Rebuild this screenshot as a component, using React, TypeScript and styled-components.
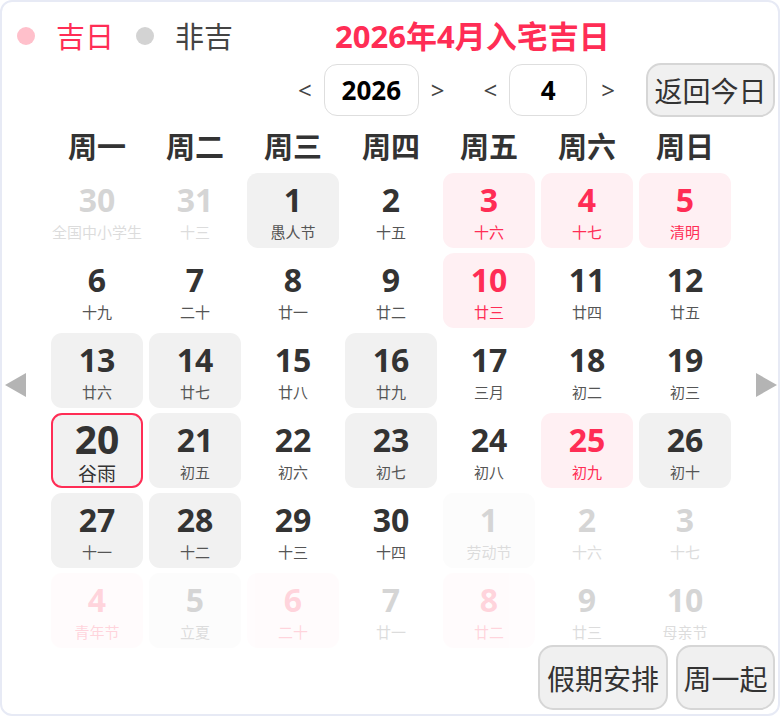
import React from "react";
import styled, { createGlobalStyle } from "styled-components";

const Global = createGlobalStyle`
  html, body { margin: 0; padding: 0; background: #fff; }
  body { font-family: "Noto Sans", "Noto Sans CJK SC", sans-serif; }
  * { box-sizing: border-box; }
`;

const RED = "#ff2d55";

const Card = styled.div`
  position: relative;
  width: 780px;
  height: 716px;
  border: 2px solid #e7eaf5;
  border-radius: 12px;
  background: #fff;
  display: flex;
  flex-direction: column;
  overflow: hidden;
`;

const TopRow = styled.div`
  display: flex;
  align-items: center;
  height: 66px;
  padding: 2px 0 0 15px;
`;

const Dot = styled.span<{ $c: string }>`
  width: 18px;
  height: 18px;
  border-radius: 50%;
  background: ${(p) => p.$c};
  margin-right: 21px;
`;

const Legend = styled.span<{ $c: string }>`
  font-size: 29px;
  color: ${(p) => p.$c};
  margin-right: 22px;
  line-height: 1;
`;

const Title = styled.h1`
  margin: 0 0 0 80px;
  font-size: 31px;
  font-weight: 700;
  color: ${RED};
  line-height: 1;
`;

const NavRow = styled.div`
  display: flex;
  align-items: center;
  justify-content: flex-end;
  height: 54px;
  margin-top: -5px;
  padding-right: 3px;
`;

const Chevron = styled.span<{ $ml?: number; $mr?: number }>`
  font-size: 24px;
  color: #444;
  margin-left: ${(p) => p.$ml ?? 0}px;
  margin-right: ${(p) => p.$mr ?? 0}px;
  line-height: 1;
`;

const NumBox = styled.div<{ $w: number }>`
  width: ${(p) => p.$w}px;
  height: 52px;
  border: 1.5px solid #dedede;
  border-radius: 13px;
  display: flex;
  align-items: center;
  justify-content: center;
  font-size: 26px;
  font-weight: 700;
  color: #000;
`;

const GreyButton = styled.button<{ $w: number; $h: number }>`
  width: ${(p) => p.$w}px;
  height: ${(p) => p.$h}px;
  background: #f0f0f0;
  border: 2px solid #d6d6d6;
  border-radius: 15px;
  font-family: "Noto Sans CJK SC", sans-serif;
  font-size: 28px;
  color: #333;
  padding: 0;
  display: flex;
  align-items: center;
  justify-content: center;
  line-height: 1;
`;

const Middle = styled.div`
  display: flex;
  align-items: center;
  margin-top: 4px;
`;

const SideArrow = styled.div<{ $dir: "l" | "r" }>`
  width: 0;
  height: 0;
  border-top: 12px solid transparent;
  border-bottom: 12px solid transparent;
  ${(p) =>
    p.$dir === "l"
      ? `border-right: 21px solid #b4b4b4; margin-left: 3px;`
      : `border-left: 21px solid #b4b4b4;`}
`;

const CalendarArea = styled.div`
  width: 686px;
  margin-left: 25px;
  margin-right: 19px;
`;

const WeekHeader = styled.div`
  display: grid;
  grid-template-columns: repeat(7, 92px);
  column-gap: 6px;
  height: 52px;
  align-items: center;
  padding-bottom: 4px;
`;

const WeekName = styled.div`
  text-align: center;
  font-size: 29px;
  font-weight: 700;
  color: #333;
  font-family: "Noto Sans CJK SC", sans-serif;
  line-height: 1;
`;

const Grid = styled.div`
  display: grid;
  grid-template-columns: repeat(7, 92px);
  grid-auto-rows: 75px;
  column-gap: 6px;
  row-gap: 5px;
`;

type Kind = "plain" | "grey" | "ji";

const Cell = styled.div<{ $kind: Kind; $other?: boolean; $today?: boolean }>`
  border-radius: 11px;
  display: flex;
  flex-direction: column;
  align-items: center;
  justify-content: center;
  background: ${(p) =>
    p.$kind === "grey" ? "#f1f1f1" : p.$kind === "ji" ? "#fff0f3" : "transparent"};
  border: ${(p) => (p.$today ? `2px solid ${RED}` : "none")};
  opacity: ${(p) => (p.$other ? 0.2 : 1)};
  color: ${(p) => (p.$kind === "ji" ? RED : "#333")};
`;

const DayNum = styled.div<{ $today?: boolean }>`
  font-size: ${(p) => (p.$today ? 39 : 32)}px;
  font-weight: 700;
  line-height: 1;
  margin-top: ${(p) => (p.$today ? 0 : 2)}px;
  font-family: "Noto Sans", sans-serif;
`;

const Lunar = styled.div<{ $kind: Kind; $today?: boolean }>`
  font-size: ${(p) => (p.$today ? 19 : 15)}px;
  line-height: 1;
  margin-top: ${(p) => (p.$today ? 5 : 8)}px;
  color: ${(p) => (p.$kind === "ji" ? RED : p.$today ? "#333" : "#555")};
  font-family: "Noto Sans CJK SC", sans-serif;
`;

const Footer = styled.div`
  display: flex;
  justify-content: flex-end;
  gap: 8px;
  margin-top: -3px;
  padding-right: 3px;
`;

type Day = { d: number; l: string; k: Kind; o?: boolean; t?: boolean };

const days: Day[] = [
  { d: 30, l: "全国中小学生", k: "plain", o: true },
  { d: 31, l: "十三", k: "plain", o: true },
  { d: 1, l: "愚人节", k: "grey" },
  { d: 2, l: "十五", k: "plain" },
  { d: 3, l: "十六", k: "ji" },
  { d: 4, l: "十七", k: "ji" },
  { d: 5, l: "清明", k: "ji" },
  { d: 6, l: "十九", k: "plain" },
  { d: 7, l: "二十", k: "plain" },
  { d: 8, l: "廿一", k: "plain" },
  { d: 9, l: "廿二", k: "plain" },
  { d: 10, l: "廿三", k: "ji" },
  { d: 11, l: "廿四", k: "plain" },
  { d: 12, l: "廿五", k: "plain" },
  { d: 13, l: "廿六", k: "grey" },
  { d: 14, l: "廿七", k: "grey" },
  { d: 15, l: "廿八", k: "plain" },
  { d: 16, l: "廿九", k: "grey" },
  { d: 17, l: "三月", k: "plain" },
  { d: 18, l: "初二", k: "plain" },
  { d: 19, l: "初三", k: "plain" },
  { d: 20, l: "谷雨", k: "grey", t: true },
  { d: 21, l: "初五", k: "grey" },
  { d: 22, l: "初六", k: "plain" },
  { d: 23, l: "初七", k: "grey" },
  { d: 24, l: "初八", k: "plain" },
  { d: 25, l: "初九", k: "ji" },
  { d: 26, l: "初十", k: "grey" },
  { d: 27, l: "十一", k: "grey" },
  { d: 28, l: "十二", k: "grey" },
  { d: 29, l: "十三", k: "plain" },
  { d: 30, l: "十四", k: "plain" },
  { d: 1, l: "劳动节", k: "grey", o: true },
  { d: 2, l: "十六", k: "plain", o: true },
  { d: 3, l: "十七", k: "plain", o: true },
  { d: 4, l: "青年节", k: "ji", o: true },
  { d: 5, l: "立夏", k: "grey", o: true },
  { d: 6, l: "二十", k: "ji", o: true },
  { d: 7, l: "廿一", k: "plain", o: true },
  { d: 8, l: "廿二", k: "ji", o: true },
  { d: 9, l: "廿三", k: "plain", o: true },
  { d: 10, l: "母亲节", k: "plain", o: true },
];

const weekNames = ["周一", "周二", "周三", "周四", "周五", "周六", "周日"];

export default function App() {
  return (
    <>
      <Global />
      <Card>
        <TopRow>
          <Dot $c="#ffc0cb" />
          <Legend $c={RED}>吉日</Legend>
          <Dot $c="#d3d3d3" />
          <Legend $c="#444">非吉</Legend>
          <Title>2026年4月入宅吉日</Title>
        </TopRow>
        <NavRow>
          <Chevron $mr={12}>&lt;</Chevron>
          <NumBox $w={95}>2026</NumBox>
          <Chevron $ml={12} $mr={39}>&gt;</Chevron>
          <Chevron $mr={12}>&lt;</Chevron>
          <NumBox $w={78}>4</NumBox>
          <Chevron $ml={14} $mr={31}>&gt;</Chevron>
          <GreyButton $w={129} $h={54}>返回今日</GreyButton>
        </NavRow>
        <Middle>
          <SideArrow $dir="l" />
          <CalendarArea>
            <WeekHeader>
              {weekNames.map((w) => (
                <WeekName key={w}>{w}</WeekName>
              ))}
            </WeekHeader>
            <Grid>
              {days.map((day, i) => (
                <Cell key={i} $kind={day.k} $other={day.o} $today={day.t}>
                  <DayNum $today={day.t}>{day.d}</DayNum>
                  <Lunar $kind={day.k} $today={day.t}>
                    {day.l}
                  </Lunar>
                </Cell>
              ))}
            </Grid>
          </CalendarArea>
          <SideArrow $dir="r" />
        </Middle>
        <Footer>
          <GreyButton $w={130} $h={65}>假期安排</GreyButton>
          <GreyButton $w={99} $h={65}>周一起</GreyButton>
        </Footer>
      </Card>
    </>
  );
}
